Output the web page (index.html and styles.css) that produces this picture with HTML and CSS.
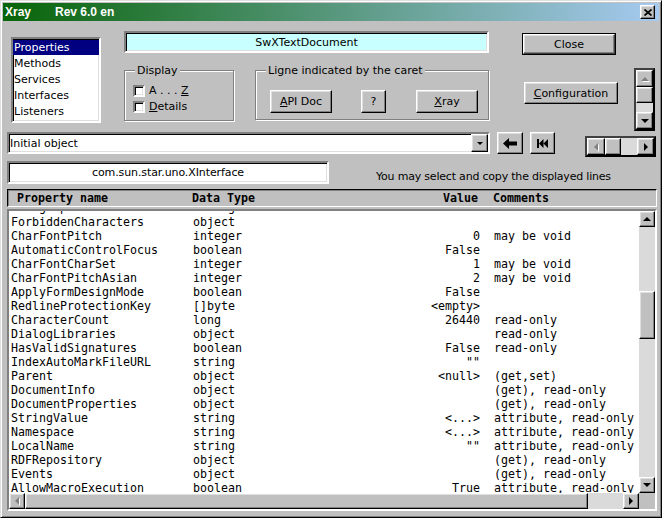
FILE: index.html
```html
<!DOCTYPE html>
<html>
<head>
<meta charset="utf-8">
<link rel="stylesheet" href="styles.css">
</head>
<body>
<div class="window">
  <div class="titlebar">
    <span class="app">Xray</span><span class="rev">Rev 6.0 en</span>
    <span class="tb-close raised"><svg width="8" height="7" viewBox="0 0 8 7"><path d="M0.5 0.5 L7.5 6.5 M7.5 0.5 L0.5 6.5" stroke="#000" stroke-width="1.7"/></svg></span>
  </div>

  <div class="top">
    <div class="list sunken">
      <div class="item sel">Properties</div>
      <div class="item">Methods</div>
      <div class="item">Services</div>
      <div class="item">Interfaces</div>
      <div class="item">Listeners</div>
    </div>
    <div class="center">
      <div class="classname sunken">SwXTextDocument</div>
      <div class="groups">
        <div class="group display">
          <span class="legend">Display</span>
          <div class="check"><span class="box sunken"></span><span>A . . . <u>Z</u></span></div>
          <div class="check"><span class="box sunken"></span><span><u>D</u>etails</span></div>
        </div>
        <div class="group caret">
          <span class="legend">Ligne indicated by the caret</span>
          <div class="btn raised w62"><span><u>A</u>PI Doc</span></div>
          <div class="btn raised w25"><span>?</span></div>
          <div class="btn raised w62"><span><u>X</u>ray</span></div>
        </div>
      </div>
    </div>
    <div class="actions">
      <div class="btn raised default">Close</div>
      <div class="btn raised config"><span><u>C</u>onfiguration</span></div>
    </div>
    <div class="mini-v">
      <span class="sbtn raised v17"><i class="tri up dis"></i></span>
      <span class="thumb raised v16"></span>
      <span class="track"></span>
      <span class="sbtn raised v17"><i class="tri down"></i></span>
    </div>
  </div>

  <div class="nav">
    <div class="combo sunken">
      <span class="combo-text">Initial object</span>
      <span class="drop raised"><i class="tri down small"></i></span>
    </div>
    <div class="btn raised tool back">
      <svg width="15" height="11" viewBox="0 0 15 11"><path d="M0 5.5 L6 0 L6 3.5 L14 3.5 L14 7.5 L6 7.5 L6 11 Z" fill="#000"/></svg>
    </div>
    <div class="btn raised tool first">
      <svg width="11" height="9" viewBox="0 0 11 9"><path d="M0 0 H2 V9 H0 Z M2 4.5 L6.5 0 V9 Z M6.5 4.5 L11 0 V9 Z" fill="#000"/></svg>
    </div>
    <div class="mini-h">
      <span class="sbtn raised h18"><i class="tri left dis"></i></span>
      <span class="thumb raised h16"></span>
      <span class="track"></span>
      <span class="sbtn raised h17"><i class="tri right"></i></span>
    </div>
  </div>

  <div class="info">
    <div class="iface sunken">com.sun.star.uno.XInterface</div>
    <div class="hint">You may select and copy the displayed lines</div>
  </div>

  <div class="head">
    <span class="hn">Property name</span><span class="ht">Data Type</span><span class="hv">Value</span><span class="hc">Comments</span>
  </div>

  <div class="table sunken">
    <div class="rows-view">
      <div class="rows">
        <div class="row partial"><span>ParagraphCount</span><span>string</span><span class="v"></span><span class="c"></span></div>
        <div class="row"><span>ForbiddenCharacters</span><span>object</span><span class="v"></span><span class="c"></span></div>
        <div class="row"><span>CharFontPitch</span><span>integer</span><span class="v">0</span><span class="c">may be void</span></div>
        <div class="row"><span>AutomaticControlFocus</span><span>boolean</span><span class="v">False</span><span class="c"></span></div>
        <div class="row"><span>CharFontCharSet</span><span>integer</span><span class="v">1</span><span class="c">may be void</span></div>
        <div class="row"><span>CharFontPitchAsian</span><span>integer</span><span class="v">2</span><span class="c">may be void</span></div>
        <div class="row"><span>ApplyFormDesignMode</span><span>boolean</span><span class="v">False</span><span class="c"></span></div>
        <div class="row"><span>RedlineProtectionKey</span><span>[]byte</span><span class="v">&lt;empty&gt;</span><span class="c"></span></div>
        <div class="row"><span>CharacterCount</span><span>long</span><span class="v">26440</span><span class="c">read-only</span></div>
        <div class="row"><span>DialogLibraries</span><span>object</span><span class="v"></span><span class="c">read-only</span></div>
        <div class="row"><span>HasValidSignatures</span><span>boolean</span><span class="v">False</span><span class="c">read-only</span></div>
        <div class="row"><span>IndexAutoMarkFileURL</span><span>string</span><span class="v">""</span><span class="c"></span></div>
        <div class="row"><span>Parent</span><span>object</span><span class="v">&lt;null&gt;</span><span class="c">(get,set)</span></div>
        <div class="row"><span>DocumentInfo</span><span>object</span><span class="v"></span><span class="c">(get), read-only</span></div>
        <div class="row"><span>DocumentProperties</span><span>object</span><span class="v"></span><span class="c">(get), read-only</span></div>
        <div class="row"><span>StringValue</span><span>string</span><span class="v">&lt;...&gt;</span><span class="c">attribute, read-only</span></div>
        <div class="row"><span>Namespace</span><span>string</span><span class="v">&lt;...&gt;</span><span class="c">attribute, read-only</span></div>
        <div class="row"><span>LocalName</span><span>string</span><span class="v">""</span><span class="c">attribute, read-only</span></div>
        <div class="row"><span>RDFRepository</span><span>object</span><span class="v"></span><span class="c">(get), read-only</span></div>
        <div class="row"><span>Events</span><span>object</span><span class="v"></span><span class="c">(get), read-only</span></div>
        <div class="row"><span>AllowMacroExecution</span><span>boolean</span><span class="v">True</span><span class="c">attribute, read-only</span></div>
      </div>
    </div>
    <div class="vsb">
      <span class="sbtn raised v16"><i class="tri up"></i></span>
      <span class="track t1"></span>
      <span class="thumb raised vthumb"></span>
      <span class="track"></span>
      <span class="sbtn raised v16"><i class="tri down"></i></span>
    </div>
    <div class="hsb">
      <span class="sbtn raised h16"><i class="tri left dis"></i></span>
      <span class="thumb raised hthumb"></span>
      <span class="track"></span>
      <span class="sbtn raised h16"><i class="tri right"></i></span>
    </div>
    <div class="corner"></div>
  </div>
</div>
</body>
</html>
```

FILE: styles.css
```css
* { box-sizing: border-box; }
html, body { margin: 0; padding: 0; }
body {
  width: 662px;
  height: 518px;
  overflow: hidden;
  background: #c0c0c0;
  font-family: "DejaVu Sans", sans-serif;
  font-size: 11px;
  color: #000;
}
u { text-decoration: underline; text-underline-offset: 1px; }

.window {
  width: 662px;
  height: 518px;
  border: 1px solid;
  border-color: #dfdfdf #000 #000 #dfdfdf;
  box-shadow: inset 1px 1px 0 #fff, inset -1px -1px 0 #808080;
  padding: 2px;
  display: flex;
  flex-direction: column;
  background: #c0c0c0;
}

.raised {
  background: #c0c0c0;
  border: 1px solid;
  border-color: #fff #000 #000 #fff;
  box-shadow: inset -1px -1px 0 #808080, inset 1px 1px 0 #dfdfdf;
}
.sunken {
  border: 2px solid;
  border-color: #808080 #fff #fff #808080;
  box-shadow: inset 1px 1px 0 #000, inset -1px -1px 0 #dfdfdf;
}

/* title bar */
.titlebar {
  height: 18px;
  flex: none;
  display: flex;
  align-items: center;
  padding-left: 2px;
  background: linear-gradient(to right, #086408, #a6caf0);
  color: #fff;
  font: bold 12px "Liberation Sans", sans-serif;
}
.app { width: 50px; }
.tb-close {
  margin-left: auto;
  margin-right: 4px;
  width: 15px;
  height: 14px;
  display: flex;
  align-items: center;
  justify-content: center;
}

/* top area */
.top {
  height: 111px;
  flex: none;
  display: flex;
  align-items: flex-start;
}
.list {
  margin: 16px 0 0 8px;
  width: 90px;
  height: 86px;
  background: #fff;
  padding: 1px 0 0 0;
}
.item {
  height: 16px;
  line-height: 16px;
  padding-left: 1px;
  white-space: nowrap;
}
.item.sel { background: #000080; color: #fff; height: 15px; line-height: 15px; margin-bottom: 1px; }

.center {
  margin: 10px 0 0 23px;
  width: 365px;
}
.classname {
  height: 22px;
  background: #c8ffff;
  display: flex;
  align-items: center;
  justify-content: center;
}
.groups {
  margin-top: 17px;
  display: flex;
  gap: 21px;
}
.group {
  position: relative;
  height: 50px;
  border: 1px solid #808080;
  box-shadow: inset 1px 1px 0 #fff, 1px 1px 0 #fff;
}
.legend {
  position: absolute;
  top: -7px;
  left: 10px;
  padding: 0 2px;
  line-height: 13px;
  background: #c0c0c0;
  white-space: nowrap;
}
.display {
  width: 110px;
  height: 51px;
  padding: 14px 0 0 8px;
  display: flex;
  flex-direction: column;
  gap: 4px;
}
.check {
  display: flex;
  align-items: center;
  gap: 4px;
  height: 12px;
  line-height: 12px;
}
.check .box {
  width: 12px;
  height: 12px;
  background: #fff;
  flex: none;
}
.caret {
  width: 234px;
  padding: 19px 0 0 14px;
  display: flex;
  align-items: flex-start;
}
.btn {
  display: flex;
  align-items: center;
  justify-content: center;
  white-space: nowrap;
}
.w62 { width: 62px; height: 23px; }
.w25 { width: 25px; height: 23px; margin: 0 30px 0 29px; }

.actions {
  margin: 12px 0 0 33px;
  width: 96px;
  display: flex;
  flex-direction: column;
}
.default {
  outline: 1px solid #000;
  outline-offset: 0;
  border-color: #fff #404040 #404040 #fff;
  margin: 1px 0 0 1px;
  width: 92px;
  height: 20px;
}
.config {
  width: 94px;
  height: 22px;
  margin: 28px 0 0 2px;
}

/* scrollbars */
.mini-v {
  margin: 47px 0 0 16px;
  width: 21px;
  height: 63px;
  border: 2px solid;
  border-color: #404040 #000 #000 #404040;
  display: flex;
  flex-direction: column;
  background: #dadada;
}
.mini-h {
  margin: 4px 0 0 30px;
  width: 71px;
  height: 21px;
  border: 2px solid;
  border-color: #404040 #000 #000 #404040;
  display: flex;
  background: #dadada;
}
.sbtn {
  display: flex;
  align-items: center;
  justify-content: center;
  flex: none;
}
.thumb { flex: none; }
.track { flex: 1; background: #dadada; }
.v17 { height: 17px; }
.v16 { height: 16px; }
.h18 { width: 18px; }
.h17 { width: 17px; }
.h16 { width: 16px; }

.tri { display: block; width: 0; height: 0; border-style: solid; }
.tri.up { border-width: 0 4px 4px 4px; border-color: transparent transparent #000 transparent; }
.tri.down { border-width: 4px 4px 0 4px; border-color: #000 transparent transparent transparent; }
.tri.left { border-width: 4px 4px 4px 0; border-color: transparent #000 transparent transparent; }
.tri.right { border-width: 4px 0 4px 4px; border-color: transparent transparent transparent #000; }
.tri.small.down { border-width: 3px 3px 0 3px; }
.tri.dis.up { border-bottom-color: #808080; filter: drop-shadow(1px 1px 0 #fff); }
.tri.dis.left { border-right-color: #808080; filter: drop-shadow(1px 1px 0 #fff); }

/* nav row */
.nav {
  height: 25px;
  flex: none;
  display: flex;
  align-items: flex-start;
  padding-left: 4px;
}
.combo {
  width: 483px;
  height: 22px;
  background: #fff;
  display: flex;
  align-items: center;
}
.combo-text { flex: 1; padding-left: 1px; }
.drop {
  width: 17px;
  height: 18px;
  display: flex;
  align-items: center;
  justify-content: center;
}
.tool { width: 26px; height: 22px; }
.back { margin-left: 7px; }
.first { margin-left: 7px; width: 25px; }

/* info row */
.info {
  flex: none;
  margin-top: 4px;
  padding-left: 4px;
  display: flex;
  align-items: flex-start;
}
.iface {
  width: 322px;
  height: 23px;
  background: #fff;
  display: flex;
  align-items: center;
  justify-content: center;
  letter-spacing: -0.1px;
}
.hint {
  margin: 9px 0 0 47px;
  line-height: 13px;
  white-space: nowrap;
  letter-spacing: -0.2px;
}

/* header */
.head {
  flex: none;
  margin: 5px 0 0 4px;
  width: 650px;
  height: 18px;
  border: 1px solid;
  border-color: #000 #fff #fff #000;
  box-shadow: inset 1px 1px 0 #808080;
  display: grid;
  grid-template-columns: 175px 120px 166px 1fr;
  padding-left: 9px;
  align-items: center;
  font: bold 11.63px "DejaVu Sans Mono", monospace;
  line-height: 14px;
  white-space: nowrap;
}
.hv { text-align: right; }
.hc { padding-left: 15px; }

/* table */
.table {
  flex: none;
  margin: 2px 0 0 4px;
  width: 650px;
  height: 302px;
  display: grid;
  grid-template-columns: 1fr 16px;
  grid-template-rows: 1fr 16px;
  background: #fff;
}
.rows-view {
  overflow: hidden;
  background: #fff;
}
.rows {
  margin-top: -10px;
  padding-left: 2px;
  font: 11.63px "DejaVu Sans Mono", monospace;
  line-height: 14px;
  white-space: nowrap;
}
.row {
  display: grid;
  grid-template-columns: 182px 120px 167px 1fr;
  height: 14px;
}
.row.partial { line-height: 12px; }
.row .v { text-align: right; }
.row .c { padding-left: 14px; }

.vsb {
  display: flex;
  flex-direction: column;
  background: #dadada;
}
.vsb .t1 { flex: none; height: 64px; }
.vthumb { height: 48px; }
.hsb {
  display: flex;
  background: #dadada;
}
.hthumb { width: 563px; }
.corner { background: #c0c0c0; }
```
